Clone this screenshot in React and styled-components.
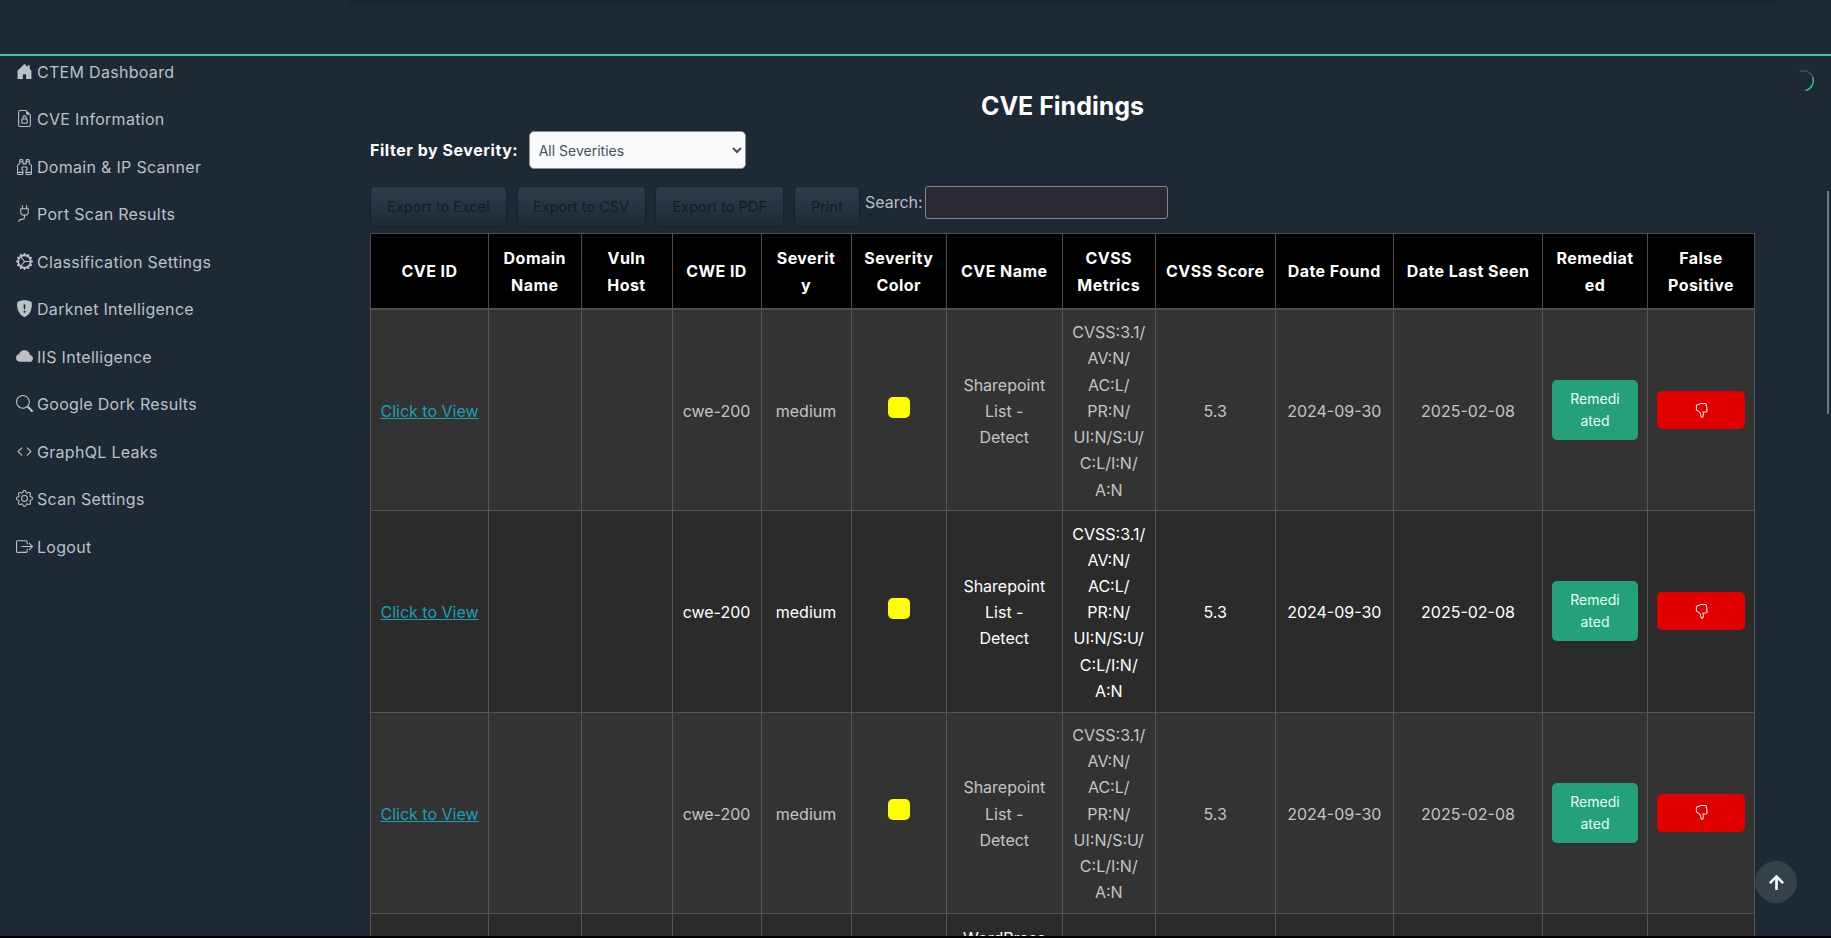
import React from "react";
import styled, { createGlobalStyle } from "styled-components";
import { FaArrowUp } from "react-icons/fa";
import {
  BsHouseDoorFill,
  BsFileEarmarkLock,
  BsBinoculars,
  BsPlug,
  BsGearWideConnected,
  BsShieldFillExclamation,
  BsCloudFill,
  BsSearch,
  BsCode,
  BsGear,
  BsBoxArrowRight,
  BsHandThumbsDown,
} from "react-icons/bs";

const FONT = `"Inter", "Liberation Sans", sans-serif`;

const GlobalStyle = createGlobalStyle`
  html, body {
    margin: 0;
    height: 100%;
    overflow: hidden;
    background: #000;
  }
  body {
    font-family: ${FONT};
    font-size: 16px;
    line-height: 1.65;
    color: #fff;
  }
`;

const Page = styled.div`
  height: 936px;
  overflow: hidden;
  background: #1d2935;
  position: relative;
`;

const TopBar = styled.header`
  height: 54px;
  background: #1d2935;
  border-bottom: 2px solid #35c9a5;
  position: relative;
  &::before {
    content: "";
    position: absolute;
    left: 350px;
    top: 0;
    width: 1425px;
    height: 10px;
    background: linear-gradient(rgba(0, 0, 0, 0.12), rgba(0, 0, 0, 0));
  }
`;

const Body = styled.div`
  display: flex;
`;

const Sidebar = styled.nav`
  width: 370px;
  flex: none;
  padding-top: 3.5px;
  display: flex;
  flex-direction: column;
`;

const NavItem = styled.a`
  height: 47.5px;
  padding-left: 16px;
  display: flex;
  align-items: flex-start;
  gap: 4px;
  color: #bcc1c6;
  font-size: 16px;
  letter-spacing: 0.3px;
  line-height: 24px;
  svg {
    width: 17px;
    height: 17px;
    margin-top: 3px;
    flex: none;
  }
`;

const Main = styled.main`
  width: 1385px;
  flex: none;
`;

const Title = styled.h2`
  margin: 0;
  padding-top: 30px;
  height: 75px;
  box-sizing: border-box;
  text-align: center;
  font-size: 25px;
  line-height: 40px;
  font-weight: 700;
`;

const FilterRow = styled.div`
  display: flex;
  align-items: center;
  gap: 10px;
  height: 38px;
`;

const FilterLabel = styled.label`
  width: 148.7px;
  flex: none;
  white-space: nowrap;
  font-weight: 700;
  font-size: 16px;
  letter-spacing: 0.55px;
`;

const SeveritySelect = styled.select`
  width: 217px;
  height: 38px;
  padding: 0 5px;
  border: 1px solid #8a8f95;
  border-radius: 5px;
  background: #f8fafc;
  color: #495057;
  font-family: ${FONT};
  font-size: 14px;
`;

const Toolbar = styled.div`
  display: flex;
  align-items: flex-start;
  gap: 9.6px;
  margin-top: 17px;
  height: 46.5px;
`;

const ExportButton = styled.button`
  height: 41px;
  width: ${(p) => p.$w}px;
  padding: 0;
  border: 1px solid #18222c;
  border-radius: 4px;
  background: linear-gradient(#303b49, #202b38);
  color: #141c24;
  font-family: ${FONT};
  font-size: 14.5px;
`;

const SearchLabel = styled.label`
  display: flex;
  align-items: flex-start;
  justify-content: space-between;
  width: 303px;
  margin-left: -4.4px;
  color: #b9bec4;
  font-size: 16px;
  line-height: 33px;
`;

const SearchInput = styled.input`
  width: 243px;
  height: 33px;
  box-sizing: border-box;
  border: 1px solid #85888c;
  border-radius: 3px;
  background: #2b2a33;
`;

const Table = styled.table`
  width: 1385px;
  table-layout: fixed;
  border-collapse: collapse;
  text-align: center;
`;

const HeadCell = styled.th`
  height: 76px;
  padding: 2px 0 0;
  box-sizing: border-box;
  background: #000;
  border: 1px solid #4d4d4d;
  border-bottom-width: 2px;
  color: #fff;
  font-size: 16px;
  letter-spacing: 0.45px;
  font-weight: 700;
  line-height: 27px;
`;

const Row = styled.tr`
  background: ${(p) => (p.$even ? "#2b2b2b" : "#333333")};
  color: ${(p) => (p.$even ? "#ffffff" : "#c4c4c4")};
`;

const Cell = styled.td`
  height: 201.5px;
  padding: ${(p) => (p.$top ? "11px 0 0" : "2px 0 0")};
  box-sizing: border-box;
  border: 1px solid #555;
  font-size: 16px;
  line-height: 26.2px;
  vertical-align: ${(p) => (p.$top ? "top" : "middle")};
`;

const ViewLink = styled.a`
  color: #1c9fb4;
  text-decoration: underline;
`;

const Swatch = styled.span`
  display: block;
  width: 22px;
  height: 21px;
  margin: -8px auto 0;
  border-radius: 5px;
  background: #ffff00;
`;

const RemediateButton = styled.button`
  width: 86px;
  height: 60px;
  margin-top: -2px;
  padding: 0;
  border: 0;
  border-radius: 5px;
  background: #24a07a;
  color: #e8fff6;
  font-family: ${FONT};
  font-size: 14px;
  line-height: 22px;
  vertical-align: middle;
`;

const RejectButton = styled.button`
  width: 88px;
  height: 38px;
  margin-top: -2px;
  padding: 0;
  border: 0;
  border-radius: 5px;
  background: #e00000;
  color: #fff;
  display: inline-flex;
  align-items: center;
  justify-content: center;
  vertical-align: middle;
`;

const Spinner = styled.svg`
  position: absolute;
  left: 1792px;
  top: 69px;
  width: 24px;
  height: 24px;
`;

const ScrollThumb = styled.div`
  position: absolute;
  right: 2px;
  top: 191px;
  width: 2px;
  height: 223px;
  background: #6d7882;
`;

const ScrollTop = styled.button`
  position: absolute;
  left: 1755px;
  top: 861px;
  width: 42px;
  height: 42px;
  border: 0;
  border-radius: 50%;
  padding: 0;
  background: #33424c;
  color: #fff;
  display: flex;
  align-items: center;
  justify-content: center;
`;

const navItems = [
  [BsHouseDoorFill, "CTEM Dashboard"],
  [BsFileEarmarkLock, "CVE Information"],
  [BsBinoculars, "Domain & IP Scanner"],
  [BsPlug, "Port Scan Results"],
  [BsGearWideConnected, "Classification Settings"],
  [BsShieldFillExclamation, "Darknet Intelligence"],
  [BsCloudFill, "IIS Intelligence"],
  [BsSearch, "Google Dork Results"],
  [BsCode, "GraphQL Leaks"],
  [BsGear, "Scan Settings"],
  [BsBoxArrowRight, "Logout"],
];

const columns = [
  [118, ["CVE ID"]],
  [92.5, ["Domain", "Name"]],
  [91, ["Vuln", "Host"]],
  [89, ["CWE ID"]],
  [90, ["Severit", "y"]],
  [95.5, ["Severity", "Color"]],
  [115.5, ["CVE Name"]],
  [93.5, ["CVSS", "Metrics"]],
  [119.5, ["CVSS Score"]],
  [118.5, ["Date Found"]],
  [149, ["Date Last Seen"]],
  [105, ["Remediat", "ed"]],
  [107, ["False", "Positive"]],
];

const metrics = ["CVSS:3.1/", "AV:N/", "AC:L/", "PR:N/", "UI:N/S:U/", "C:L/I:N/", "A:N"];

const Lines = ({ items }) =>
  items.map((line, i) => (
    <React.Fragment key={line}>
      {i > 0 && <br />}
      {line}
    </React.Fragment>
  ));

const Finding = ({ even }) => (
  <Row $even={even}>
    <Cell>
      <ViewLink href="#">Click to View</ViewLink>
    </Cell>
    <Cell />
    <Cell />
    <Cell>cwe-200</Cell>
    <Cell>medium</Cell>
    <Cell>
      <Swatch />
    </Cell>
    <Cell>
      <Lines items={["Sharepoint", "List -", "Detect"]} />
    </Cell>
    <Cell>
      <Lines items={metrics} />
    </Cell>
    <Cell>5.3</Cell>
    <Cell>2024-09-30</Cell>
    <Cell>2025-02-08</Cell>
    <Cell>
      <RemediateButton>
        <Lines items={["Remedi", "ated"]} />
      </RemediateButton>
    </Cell>
    <Cell>
      <RejectButton aria-label="False positive">
        <BsHandThumbsDown size={15} />
      </RejectButton>
    </Cell>
  </Row>
);

const App = () => (
  <Page>
    <GlobalStyle />
    <TopBar />
    <Body>
      <Sidebar>
        {navItems.map(([Icon, label]) => (
          <NavItem key={label}>
            <Icon />
            {label}
          </NavItem>
        ))}
      </Sidebar>
      <Main>
        <Title>CVE Findings</Title>
        <FilterRow>
          <FilterLabel>Filter by Severity:</FilterLabel>
          <SeveritySelect defaultValue="all">
            <option value="all">All Severities</option>
          </SeveritySelect>
        </FilterRow>
        <Toolbar>
          <ExportButton $w={137}>Export to Excel</ExportButton>
          <ExportButton $w={129}>Export to CSV</ExportButton>
          <ExportButton $w={129}>Export to PDF</ExportButton>
          <ExportButton $w={66}>Print</ExportButton>
          <SearchLabel>
            Search:
            <SearchInput type="text" />
          </SearchLabel>
        </Toolbar>
        <Table>
          <colgroup>
            {columns.map(([width, label]) => (
              <col key={label.join()} width={width} />
            ))}
          </colgroup>
          <thead>
            <tr>
              {columns.map(([, label]) => (
                <HeadCell key={label.join()}>
                  <Lines items={label} />
                </HeadCell>
              ))}
            </tr>
          </thead>
          <tbody>
            <Finding />
            <Finding even />
            <Finding />
            <Row $even>
              <Cell />
              <Cell />
              <Cell />
              <Cell />
              <Cell />
              <Cell />
              <Cell $top>WordPress</Cell>
              <Cell />
              <Cell />
              <Cell />
              <Cell />
              <Cell />
              <Cell />
            </Row>
          </tbody>
        </Table>
      </Main>
    </Body>
    <Spinner viewBox="0 0 24 24" fill="none" strokeWidth="1.4" strokeLinecap="round">
      <path d="M8 2.3A10 10 0 0 1 21 9" stroke="#46535f" />
      <path d="M21 9A10 10 0 0 1 14 21.4" stroke="#35c9a5" />
    </Spinner>
    <ScrollThumb />
    <ScrollTop aria-label="Back to top">
      <FaArrowUp size={17} />
    </ScrollTop>
  </Page>
);

export default App;
